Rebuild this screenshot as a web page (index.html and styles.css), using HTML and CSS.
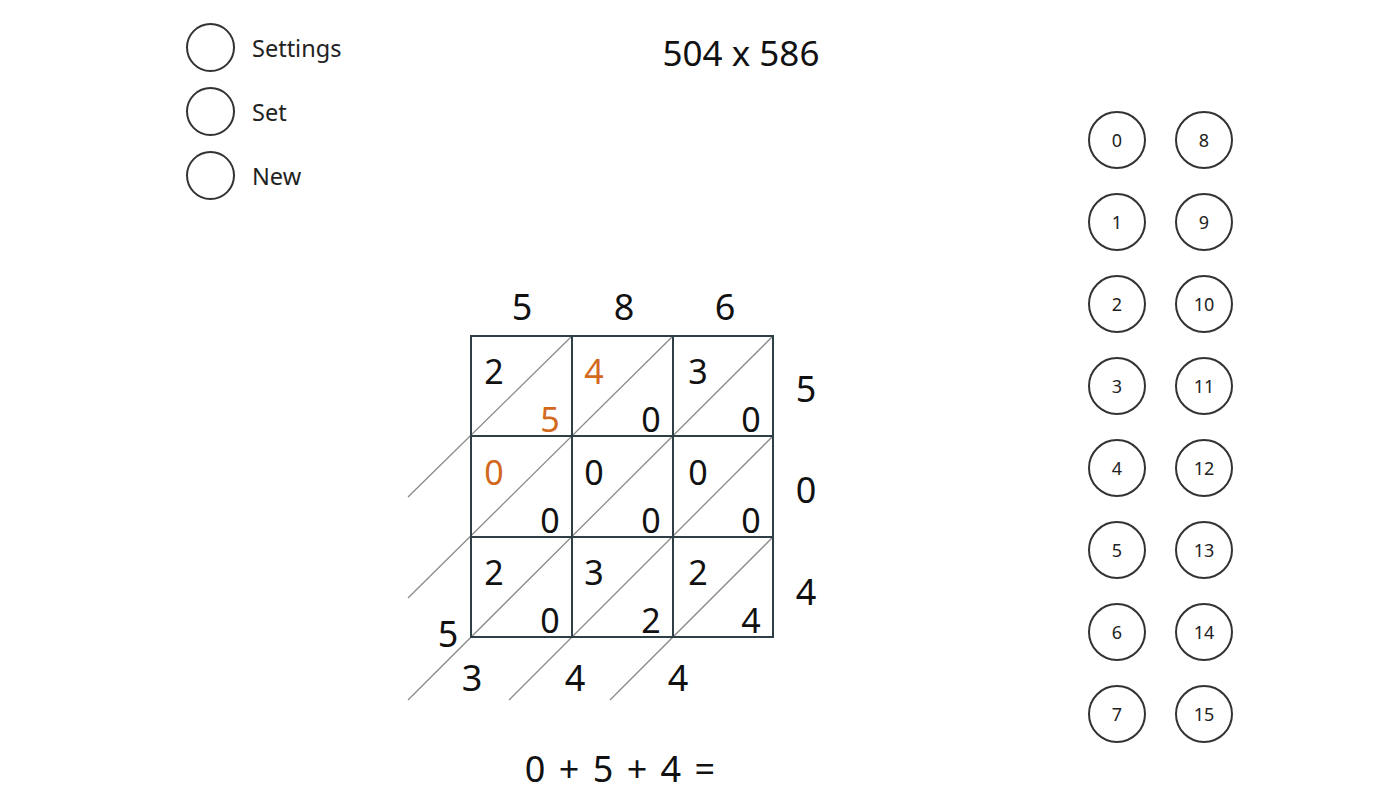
FILE: index.html
```html
<!DOCTYPE html>
<html lang="en">
<head>
    <meta charset="UTF-8">
    <title>Lattice Multiplication</title>
    <link rel="stylesheet" href="styles.css">
</head>
<body>
    <div class="app">
        <!-- Menu -->
        <div class="menu">
            <div class="menu-item"><span class="round"></span><span>Settings</span></div>
            <div class="menu-item"><span class="round"></span><span>Set</span></div>
            <div class="menu-item"><span class="round"></span><span>New</span></div>
        </div>

        <!-- Board -->
        <div class="board">
            <div class="title">504 x 586</div>

            <svg class="lattice" width="430" height="430" viewBox="0 0 430 430">
                <!-- diagonals -->
                <g class="diag">
                    <line x1="8" y1="217" x2="172" y2="56"/>
                    <line x1="8" y1="318" x2="273" y2="56"/>
                    <line x1="8" y1="420" x2="373" y2="56"/>
                    <line x1="109" y1="420" x2="373" y2="156"/>
                    <line x1="210" y1="420" x2="373" y2="257"/>
                </g>
                <!-- grid -->
                <g class="grid">
                    <rect x="71" y="56" width="302" height="301"/>
                    <line x1="172" y1="56" x2="172" y2="357"/>
                    <line x1="273" y1="56" x2="273" y2="357"/>
                    <line x1="71" y1="156" x2="373" y2="156"/>
                    <line x1="71" y1="257" x2="373" y2="257"/>
                </g>
                <!-- factors -->
                <g class="factor">
                    <text x="122" y="40">5</text>
                    <text x="224" y="40">8</text>
                    <text x="325" y="40">6</text>
                    <text x="406" y="122">5</text>
                    <text x="406" y="223">0</text>
                    <text x="406" y="325">4</text>
                </g>
                <!-- products -->
                <g class="cell">
                    <text x="94" y="104">2</text>
                    <text x="150" y="152" class="hl">5</text>
                    <text x="194" y="104" class="hl">4</text>
                    <text x="251" y="152">0</text>
                    <text x="298" y="104">3</text>
                    <text x="351" y="152">0</text>

                    <text x="94" y="205" class="hl">0</text>
                    <text x="150" y="253">0</text>
                    <text x="194" y="205">0</text>
                    <text x="251" y="253">0</text>
                    <text x="298" y="205">0</text>
                    <text x="351" y="253">0</text>

                    <text x="94" y="305">2</text>
                    <text x="150" y="353">0</text>
                    <text x="194" y="305">3</text>
                    <text x="251" y="353">2</text>
                    <text x="298" y="305">2</text>
                    <text x="351" y="353">4</text>
                </g>
                <!-- result -->
                <g class="factor">
                    <text x="48" y="367">5</text>
                    <text x="72" y="411">3</text>
                    <text x="175" y="411">4</text>
                    <text x="278" y="411">4</text>
                </g>
            </svg>

            <div class="sum">0 + 5 + 4 =</div>
        </div>

        <!-- Keypad -->
        <div class="keypad">
            <button class="key">0</button><button class="key">8</button>
            <button class="key">1</button><button class="key">9</button>
            <button class="key">2</button><button class="key">10</button>
            <button class="key">3</button><button class="key">11</button>
            <button class="key">4</button><button class="key">12</button>
            <button class="key">5</button><button class="key">13</button>
            <button class="key">6</button><button class="key">14</button>
            <button class="key">7</button><button class="key">15</button>
        </div>
    </div>
</body>
</html>
```

FILE: styles.css
```css
body {
    margin: 0;
    padding: 0;
    background-color: white;
    font-family: "Noto Sans", "Open Sans", sans-serif;
    color: #111;
}
.app {
    display: flex;
    align-items: flex-start;
    padding-top: 23px;
}
.menu {
    margin-left: 186px;
    width: 214px;
    display: flex;
    flex-direction: column;
    gap: 15px;
}
.menu-item {
    display: flex;
    align-items: center;
    gap: 17px;
    font-size: 23.5px;
    color: #222;
}
.round {
    width: 45px;
    height: 45px;
    border: 2px solid #333;
    border-radius: 50%;
}
.board {
    width: 682px;
    display: flex;
    flex-direction: column;
}
.title {
    margin-top: 12px;
    text-align: center;
    font-size: 35px;
    line-height: 35px;
}
.lattice {
    display: block;
    margin-top: 210px;
}
.lattice text {
    font-family: "Noto Sans", "Open Sans", sans-serif;
    text-anchor: middle;
    fill: #111;
}
.factor text {
    font-size: 36px;
}
.cell text {
    font-size: 34px;
}
.lattice text.hl {
    fill: #d2691e;
}
.diag line {
    stroke: #8a8a8a;
    stroke-width: 1.3;
}
.grid rect, .grid line {
    fill: none;
    stroke: #2f3f46;
    stroke-width: 2;
}
.sum {
    width: 440px;
    margin-top: 44px;
    text-align: center;
    font-size: 36px;
    line-height: 30px;
    word-spacing: 4px;
}
.keypad {
    margin-left: 6px;
    margin-top: 88px;
    display: grid;
    grid-template-columns: 58px 58px;
    column-gap: 29px;
    row-gap: 24px;
}
.key {
    width: 58px;
    height: 58px;
    padding: 0;
    border: 2px solid #333;
    border-radius: 50%;
    background: white;
    font-family: "Noto Sans", "Open Sans", sans-serif;
    font-size: 18px;
    color: #222;
}
```
